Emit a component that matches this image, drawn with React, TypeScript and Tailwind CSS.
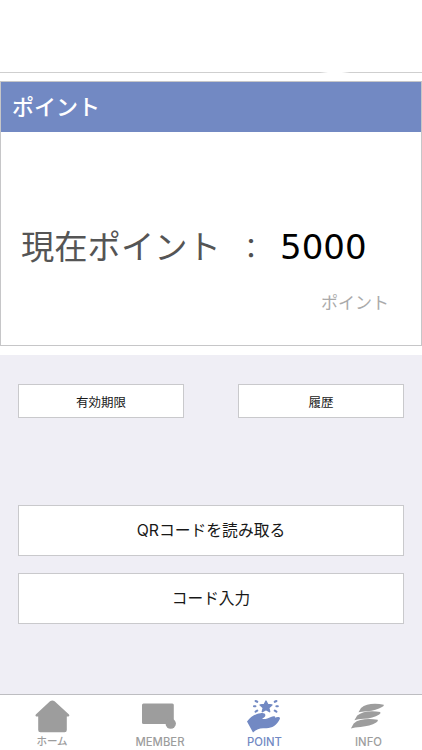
import type { ReactNode } from 'react';
import clsx from 'clsx';

type Tab = { label: string; icon: ReactNode; active?: boolean; className: string };

const TABS: Tab[] = [
  {
    label: 'ホーム',
    className: 'w-[104px] text-[10.5px]',
    icon: (
      <path d="M16 1.2 Q18.3 -.4 20.6 1.2 L35 14.6 Q36 16 34.5 16.5 L32.8 16.5 V30 Q32.8 32.2 30.6 32.2 H6.4 Q4.2 32.2 4.2 30 V16.5 L2.2 16.5 Q.8 16 1.8 14.6 Z" />
    ),
  },
  {
    label: 'MEMBER',
    className: 'w-28 text-[11.3px]',
    icon: (
      <>
        <rect x="0" y="3.5" width="31.8" height="20.6" rx="1.5" />
        <circle cx="28.7" cy="23.6" r="5.2" />
      </>
    ),
  },
  {
    label: 'POINT',
    active: true,
    className: 'w-[97px] text-[11.3px]',
    icon: (
      <>
        <path d="M20 1 l1.8 3.5 4.1 .5 -3.1 2.8 .9 3.9 -3.7 -2 -3.7 2 .9 -3.9 -3.1 -2.8 4.1 -.5z" strokeLinejoin="round" stroke="currentColor" strokeWidth="1.4" />
        <path d="M9.6 1 l1.6 .8 M8 6.2 h1.4 M9.6 11.6 l1.6 -1 M30.4 1 l-1.6 .8 M31.8 6.2 h-1.4 M30.4 11.6 l-1.6 -1" stroke="currentColor" strokeWidth="2.1" strokeLinecap="round" />
        <path d="M1 21.5 C5 17 8 14.2 14.5 13.2 C18.6 12.4 20.6 14.6 18.6 17 L16 19 C19.4 19.4 22 18.4 25 17 C27.7 15.4 30 16.2 29 17.8 C31.6 16.4 35.2 16.8 33.6 19.6 C30.2 25.6 25.5 29 18.5 28.2 C13 27.8 10.4 29.6 7 32.4 Z" />
      </>
    ),
  },
  {
    label: 'INFO',
    className: 'w-[111px] text-[11.3px]',
    icon: (
      <>
        <path d="M8.5 12.3 L11 8 C16 3.6 25 2.8 33.8 4.8 Q34.3 6 32 7 Q26.5 10.6 17 11.2 Q11 11.4 8.5 12.3Z" />
        <path d="M4.4 20.2 L7.2 15.6 C12.2 11.4 21 10.4 30.2 12 Q31.2 13.2 29.2 14.4 Q23 18.4 13.5 18.8 Q7.5 19.2 4.4 20.2Z" />
        <path d="M.9 28.6 L3.7 23.4 C8.7 19.2 18 18.3 27.7 19.8 Q28.7 21 26.2 22.6 Q20 26.4 10.5 26.9 Q4.5 27.2 .9 28.6Z" />
      </>
    ),
  },
];

function OutlineButton({ children, className }: { children: ReactNode; className: string }) {
  return (
    <button className={clsx('flex items-center justify-center border border-[#c9c9cc] bg-white text-[#181818]', className)}>
      {children}
    </button>
  );
}

export default function App() {
  return (
    <div className="flex h-[750px] w-[422px] flex-col overflow-hidden bg-white font-['Inter','Noto_Sans_CJK_JP',sans-serif]">
      {/* Header rule, fading out into a short gap on the right */}
      <header className="flex h-[81px] shrink-0 items-start pt-[72px]">
        <div className="h-px w-[320px] bg-[#cfcfcf]" />
        <div className="h-px w-2 bg-linear-to-r from-[#cfcfcf] to-white" />
        <div className="ml-[14px] h-px w-2 bg-linear-to-l from-[#cfcfcf] to-white" />
        <div className="h-px flex-1 bg-[#cfcfcf]" />
      </header>

      {/* Balance card */}
      <section className="h-[265px] shrink-0 border border-[#c6c6c8]">
        <h1 className="flex h-[50px] items-center bg-[#7289c3] pl-[11px] text-[22px] leading-none font-medium text-white">
          ポイント
        </h1>
        <div className="mt-[86px] flex h-[58px] items-center whitespace-nowrap">
          <span className="ml-5 w-[210px] pt-px text-[33.3px] leading-none text-[#555]">現在ポイント</span>
          <span className="w-10 text-center font-['Noto_Sans_CJK_JP',sans-serif] text-[28px] leading-none text-[#505050]">：</span>
          <span className="ml-[9px] font-['DejaVu_Sans',sans-serif] text-[34px] leading-none text-black">5000</span>
        </div>
        <p className="pt-[19px] pr-8 text-right text-[17px] leading-none text-[#aaa]">ポイント</p>
      </section>

      {/* Actions */}
      <main className="mt-[9px] h-[339px] shrink-0 bg-[#efeef5] px-[18px] pt-[29px]">
        <div className="flex justify-between">
          <OutlineButton className="h-[34px] w-[166px] pt-1 text-[12.5px]">有効期限</OutlineButton>
          <OutlineButton className="h-[34px] w-[166px] pt-1 text-[12.5px]">履歴</OutlineButton>
        </div>
        <div className="mt-[87px] flex flex-col gap-[17px]">
          <OutlineButton className="h-[51px] w-full pt-px text-[15.8px]">QRコードを読み取る</OutlineButton>
          <OutlineButton className="h-[51px] w-full pt-px text-[15.7px]">コード入力</OutlineButton>
        </div>
      </main>

      {/* Tab bar */}
      <nav className="flex h-14 shrink-0 border-t border-[#bdbdc1] pt-[5px]">
        {TABS.map(tab => (
          <button
            key={tab.label}
            className={clsx('flex shrink-0 flex-col items-center', tab.className, tab.active ? 'text-[#7289c3]' : 'text-[#9d9d9d]')}
          >
            <svg viewBox="0 0 37 34" className="h-[34px] w-[37px] shrink-0 overflow-visible" fill="currentColor">
              {tab.icon}
            </svg>
            <span className="mt-[3px] leading-none font-medium">{tab.label}</span>
          </button>
        ))}
      </nav>
    </div>
  );
}
